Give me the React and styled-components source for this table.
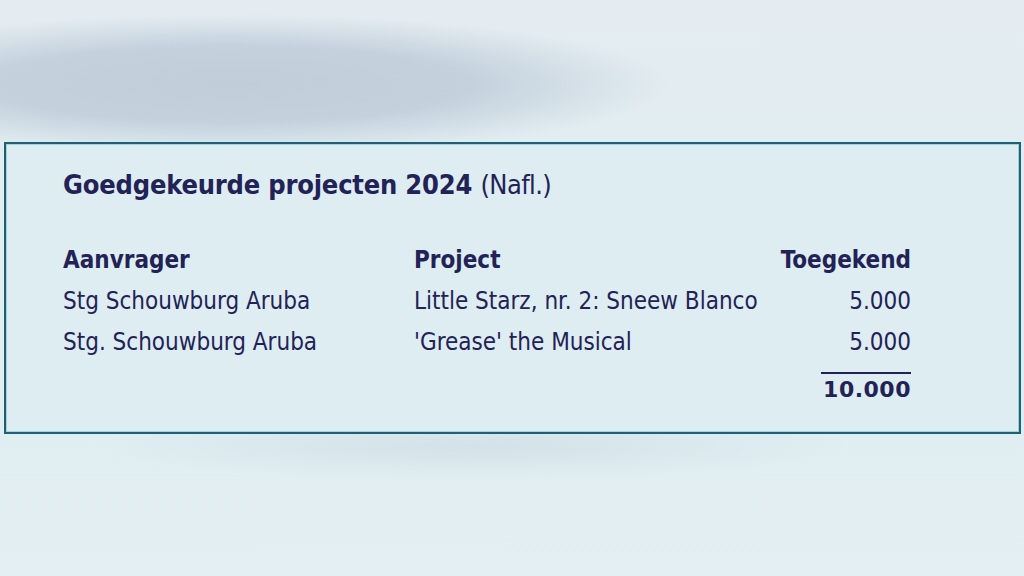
import React from "react";
import styled, { createGlobalStyle } from "styled-components";

const Global = createGlobalStyle`
  html, body {
    margin: 0;
    padding: 0;
  }
  body {
    width: 1024px;
    height: 576px;
    overflow: hidden;
    background-color: #e1edf1;
    background-image:
      radial-gradient(ellipse 440px 70px at 230px 84px, rgba(193, 206, 218, 1) 0%, rgba(195, 208, 220, 0.95) 55%, rgba(225, 237, 241, 0) 100%),
      radial-gradient(ellipse 380px 34px at 470px 446px, rgba(208, 222, 230, 0.8) 0%, rgba(225, 237, 241, 0) 100%),
      linear-gradient(#e4ecf1, #e1edf1 30%, #e0edf1 70%, #e3eff2);
    font-family: "DejaVu Sans Condensed", "Liberation Sans", sans-serif;
    color: #232257;
  }
`;

const Page = styled.div`
  padding: 142px 3px 0 4px;
`;

const Panel = styled.section`
  box-sizing: border-box;
  height: 292px;
  border: 2px solid #1d6175;
  box-shadow: inset 0 0 0 1px #a6d0d8;
  background: #deedf1;
  padding: 23px 108px 0 57px;
`;

const Title = styled.h2`
  margin: 0 0 36px;
  font-size: 27px;
  line-height: 36px;
  font-weight: 700;
  letter-spacing: -0.2px;
`;

const Unit = styled.span`
  font-weight: 400;
  letter-spacing: -0.6px;
`;

const Table = styled.div`
  display: grid;
  grid-template-columns: 351px 1fr auto;
  grid-auto-rows: 41px;
  align-items: center;
  font-size: 24px;
`;

const Cell = styled.div`
  font-weight: ${(p) => (p.$head ? 700 : 400)};
  text-align: ${(p) => (p.$num ? "right" : "left")};
  white-space: nowrap;
`;

const Total = styled.div`
  grid-column: 3;
  justify-self: end;
  align-self: start;
  margin-top: 10px;
  width: 90px;
  border-top: 2px solid #232257;
  padding-top: 3px;
  text-align: right;
  font-family: "DejaVu Sans", sans-serif;
  font-weight: 700;
  font-size: 22px;
  letter-spacing: 0.5px;
`;

const rows = [
  { applicant: "Stg Schouwburg Aruba", project: "Little Starz, nr. 2: Sneew Blanco", amount: "5.000" },
  { applicant: "Stg. Schouwburg Aruba", project: "'Grease' the Musical", amount: "5.000" },
];

const App = () => {
  return (
    <>
      <Global />
      <Page>
        <Panel>
          <Title>
            Goedgekeurde projecten 2024 <Unit>(Nafl.)</Unit>
          </Title>
          <Table>
            <Cell $head>Aanvrager</Cell>
            <Cell $head>Project</Cell>
            <Cell $head $num>Toegekend</Cell>
            {rows.map((r) => (
              <React.Fragment key={r.applicant}>
                <Cell>{r.applicant}</Cell>
                <Cell>{r.project}</Cell>
                <Cell $num>{r.amount}</Cell>
              </React.Fragment>
            ))}
            <Total>10.000</Total>
          </Table>
        </Panel>
      </Page>
    </>
  );
};

export default App;
